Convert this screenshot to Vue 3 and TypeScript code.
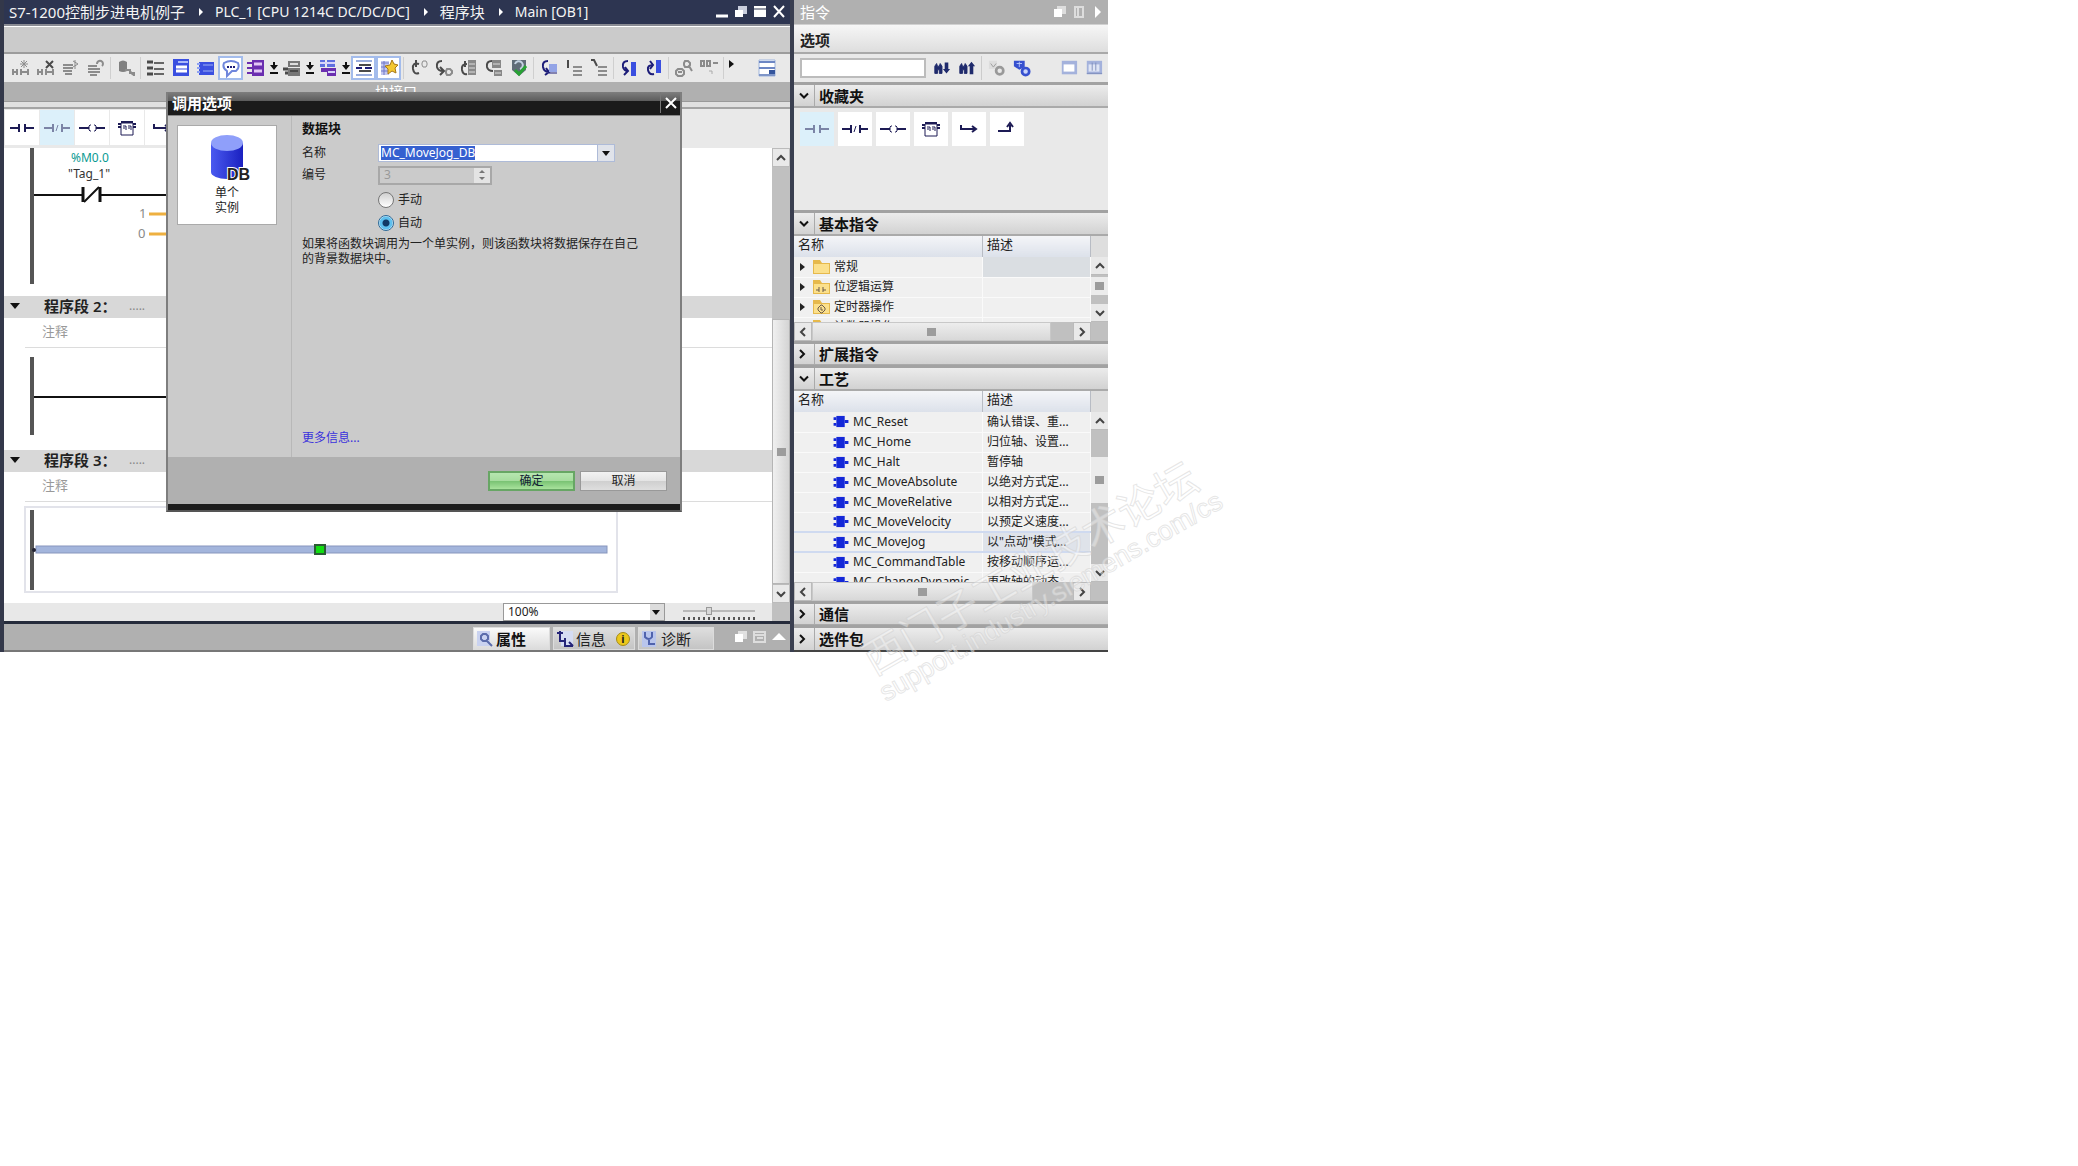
<script setup lang="ts">
import { onMounted, ref } from 'vue'

interface Shape { d: string; f?: string; s?: string; w?: number }
interface Tool { kind: 'icon' | 'drop' | 'sep' | 'more'; label?: string; boxed?: boolean; shapes?: Shape[] }

const G = '#8c8c8c'
const K = '#4a4a4a'
const B = '#3a4fe0'
const N = '#1c1c78'
const P = '#6b2fb0'

const icon = (label: string, shapes: Shape[], boxed = false): Tool => ({ kind: 'icon', label, shapes, boxed })
const sep: Tool = { kind: 'sep' }
const drop: Tool = { kind: 'drop', label: '展开' }

const tools: Tool[] = [
  icon('插入程序段', [{ d: 'M2 11v6M2 14h4M6 11v6M10 11v6M10 14h7M17 11v6', s: G, w: 2 }, { d: 'M13 2v8M9 6h8M10 3l6 6M16 3l-6 6', s: G }]),
  icon('删除程序段', [{ d: 'M2 11v6M2 14h4M6 11v6M10 11v6M10 14h7M17 11v6', s: G, w: 2 }, { d: 'M10 3l7 7M17 3l-7 7', s: K, w: 2 }]),
  icon('插入行', [{ d: 'M2 7h10M2 10h10M2 13h9M4 16h7', s: G, w: 2 }, { d: 'M12 3l5 3-5 3M14 2v9', s: G }]),
  icon('添加行', [{ d: 'M2 8h9M2 11h12M2 14h12M4 17h7', s: G, w: 2 }, { d: 'M11 6a3 3 0 1 1 5 2', s: G, w: 2 }]),
  sep,
  icon('复位启动值', [{ d: 'M3 4q4-3 8 0v9q-4 2-8 0z', f: '#808080' }, { d: 'M9 12h5v3h4v3M14 13l3 4', s: G, w: 2 }]),
  sep,
  icon('打开所有程序段', [{ d: 'M1 4h6M1 10h6M1 16h6', s: K, w: 3 }, { d: 'M8 5h10M8 11h10M8 16h10', s: '#666', w: 2 }]),
  icon('关闭所有程序段', [{ d: 'M2 1h16v17h-16z', f: B }, { d: 'M7 4h10', s: '#aab8f8', w: 2 }, { d: 'M5 9h11M5 13h11', s: '#fff', w: 3 }]),
  icon('编辑器布局', [{ d: 'M3 4h15v13h-15z', f: B }, { d: 'M1 6h3M1 10h3M1 14h3', s: '#8fa2f2', w: 2 }, { d: 'M7 7h10M7 13h10', s: '#9db1f4', w: 1 }]),
  icon('注释', [{ d: 'M3 5q7-4 14 0q2 5-2 8h-4l-5 5v-5q-5-3-3-8z', f: '#fff', s: '#6f86dc', w: 2 }, { d: 'M6 9h2M9 9h2M12 9h2', s: N, w: 2 }], true),
  icon('绝对操作数', [{ d: 'M6 2h12v16h-12z', f: P }, { d: 'M1 5h5M1 10h5M1 15h5', s: P, w: 2 }, { d: 'M8 6h8M8 13h8', s: '#e3c8f6', w: 3 }]),
  drop,
  icon('变量信息', [{ d: 'M6 3h12v6h-12zM6 10h12v8h-12z', f: '#777' }, { d: 'M1 11h5M3 15h3', s: K, w: 3 }, { d: 'M8 6h8', s: '#ddd', w: 2 }, { d: 'M8 13h8', s: K, w: 2 }]),
  drop,
  icon('块调用', [{ d: 'M2 2h5v7h-5zM9 2h8v7h-8z', f: '#5f6fe0' }, { d: 'M3 10h15v8h-9v-4h-6z', f: P }, { d: 'M2 5h15M10 14h7', s: '#d7d3fa', w: 2 }]),
  drop,
  icon('显示网络', [{ d: 'M2 3h16M2 17h16', s: '#9aaede', w: 2 }, { d: 'M5 7h12M5 13h12', s: K, w: 2 }, { d: 'M2 10h6M11 10h7', s: N, w: 2 }], true),
  icon('收藏', [{ d: 'M2 3h8v14h-8z', f: '#c4c8f0' }, { d: 'M2 5h8M2 9h8M2 13h8M5 3v14', s: '#7179c8' }, { d: 'M13 2l2 4 4 1-3 3 1 5-4-2-4 3v-5l-3-3 5-1z', f: '#f4c832', s: '#a87818' }], true),
  { kind: 'sep' },
  icon('转到上一个错误', [{ d: 'M10 6q-7-2-6 5 1 6 6 4M7 2v7', s: K, w: 2 }, { d: 'M14 3h3l1 2v2l-1 2h-3l-1-2v-2z', s: G }]),
  icon('转到下一个错误', [{ d: 'M8 3q-6 0-5 6 1 4 6 4M6 9l4 4-4 4', s: K, w: 2 }, { d: 'M13 11h3l2 2v2l-2 2h-3l-1-2v-2z', s: G, w: 2 }]),
  icon('更新调用', [{ d: 'M8 6q-6 0-5 6 1 5 5 4M6 3v6', s: K, w: 2 }, { d: 'M9 2h8v15h-8z', f: '#8a8a8a' }, { d: 'M10 6h6M10 10h6M10 14h6', s: '#ddd' }]),
  icon('编译块', [{ d: 'M8 3q-6 0-5 6 1 4 6 4', s: K, w: 2 }, { d: 'M8 2h9v8h-9zM10 12h8v6h-8z', f: '#888' }, { d: 'M9 6h7M11 15h6', s: '#ddd' }]),
  icon('一致性检查', [{ d: 'M3 2h14v10l-7 6-7-6z', f: '#606c78' }, { d: 'M6 6a4 4 0 1 1 5 5', s: '#c4d2e2', w: 2 }, { d: 'M6 12l4 4 7-8', s: '#28a234', w: 3 }]),
  sep,
  icon('转到', [{ d: 'M9 3q-6 0-5 6 1 5 6 5M7 10l3 4-4 3', s: N, w: 2 }, { d: 'M10 6h8v8h-8z', f: '#93a4e6' }, { d: 'M10 15h8', s: N, w: 1 }]),
  icon('向下', [{ d: 'M4 2v8', s: K, w: 2 }, { d: 'M9 9h9M9 13h9M9 17h9', s: G, w: 2 }]),
  icon('向右下', [{ d: 'M2 2h3l3 6', s: K, w: 2 }, { d: 'M9 9h9M9 13h9M9 17h9', s: G, w: 2 }]),
  sep,
  icon('向下导航', [{ d: 'M9 3q-6 0-5 6 1 4 5 4M6 9l3 4-4 4', s: N, w: 2 }, { d: 'M12 4h5v14h-5z', f: B }]),
  icon('向上导航', [{ d: 'M9 7q-6 0-5 5 1 5 6 4M6 3l3 4-3 4', s: N, w: 2 }, { d: 'M12 2h5v13h-5z', f: B }]),
  sep,
  icon('监视', [{ d: 'M11 3h3l2 2v2l-2 2h-3l-1-2v-2zM15 8l3 5', s: G, w: 2 }, { d: 'M4 11h4l2 2v3l-2 2h-4l-2-2v-3zM4 14h4', s: G, w: 2 }]),
  icon('监视开关', [{ d: 'M2 3h3v5h-3zM8 3h3v5h-3zM14 5h5', s: G, w: 2 }, { d: 'M10 13h3v3', s: '#aaa' }]),
  sep,
  { kind: 'more', label: '更多' },
]

const gridIcon: Shape[] = [{ d: 'M2 2h16v16h-16z', f: '#fff', s: '#9eb4dc' }, { d: 'M2 4h16M2 10h16', s: '#6d87c4', w: 2 }, { d: 'M12 12h6v6h-6z', f: '#34559c' }, { d: 'M2 17h16', s: '#7f96c8', w: 2 }]

const NV = '#1d1b55'
const contact: Shape[] = [{ d: 'M1 10h8M17 10h8', s: NV, w: 2 }, { d: 'M10 6v8M16 6v8', s: NV, w: 2 }]
const ncContact: Shape[] = [{ d: 'M0 10h9M18 10h8', s: NV, w: 2 }, { d: 'M9 6v8M18 6v8', s: NV, w: 2 }, { d: 'M12 13l2-6', s: NV }]
const coil: Shape[] = [{ d: 'M0 10h10M17 10h9', s: NV, w: 2 }, { d: 'M12 7h-1l-1 1v4l1 1h1M15 7h1l1 1v4l-1 1h-1', s: NV, w: 1 }]
const box: Shape[] = [{ d: 'M7 5h12v12h-12z', s: NV }, { d: 'M4 6h3M19 6h3M4 9h3M19 9h3', s: NV, w: 2 }, { d: 'M7 4h12', s: NV, w: 2 }, { d: 'M9 8h3v4M14 8h3v4M10 9v2M15 9v2', s: NV, w: 1 }]
const open: Shape[] = [{ d: 'M5 6v4h14M16 7l4 3-4 3', s: NV, w: 2 }]
const close: Shape[] = [{ d: 'M4 12h12v-6M13 8l3-4 3 4', s: NV, w: 2 }]

const editorFavs = [
  { label: '常开触点', shapes: contact }, { label: '常闭触点', shapes: ncContact, on: true }, { label: '赋值', shapes: coil },
  { label: '空功能框', shapes: box }, { label: '打开分支', shapes: open },
]
const sideFavs = [
  { label: '常开触点', shapes: contact, on: true }, { label: '常闭触点', shapes: ncContact }, { label: '赋值', shapes: coil },
  { label: '空功能框', shapes: box }, { label: '打开分支', shapes: open }, { label: '嵌套闭合', shapes: close },
]

const folders = [
  { name: '常规', mark: '', on: true }, { name: '位逻辑运算', mark: 'M6 8v5M10 8v5M3 11h3M10 11h3' },
  { name: '定时器操作', mark: 'M8 6h1l3 3v2l-3 3h-1l-3-3v-2zM8 8v3h2' }, { name: '计数器操作', mark: 'M5 8h6' },
]
const motion = [
  { name: 'MC_Reset', desc: '确认错误、重...' }, { name: 'MC_Home', desc: '归位轴、设置...' }, { name: 'MC_Halt', desc: '暂停轴' },
  { name: 'MC_MoveAbsolute', desc: '以绝对方式定...' }, { name: 'MC_MoveRelative', desc: '以相对方式定...' },
  { name: 'MC_MoveVelocity', desc: '以预定义速度...' }, { name: 'MC_MoveJog', desc: '以"点动"模式...', on: true },
  { name: 'MC_CommandTable', desc: '按移动顺序运...' }, { name: 'MC_ChangeDynamic', desc: '更改轴的动态...' },
]

const crumbs = [
  { text: 'S7-1200控制步进电机例子' }, { text: 'PLC_1 [CPU 1214C DC/DC/DC]', latin: true },
  { text: '程序块' }, { text: 'Main [OB1]', latin: true },
]
const dbName = ref('MC_MoveJog_DB')
const mode = ref('auto')
const zoom = ref('100%')
const zoomLevel = ref(35)
const nameBox = ref<HTMLInputElement | null>(null)
onMounted(() => {
  nameBox.value?.focus()
  nameBox.value?.select()
})
</script>

<template>
  <div class="page">
    <main class="shell">
      <section class="editor">
        <header class="titlebar">
          <nav class="crumbs">
            <template v-for="(c, i) in crumbs" :key="c.text">
              <i v-if="i" class="crumb-arrow"></i><span :class="{ latin: c.latin }">{{ c.text }}</span>
            </template>
          </nav>
          <div class="winctl">
            <button aria-label="最小化"><svg viewBox="0 0 14 14"><path d="M1 11h12" stroke="#fff" stroke-width="3" /></svg></button>
            <button aria-label="浮动"><svg viewBox="0 0 14 14"><path d="M4 1h9v8h-9z" fill="#c9cedd" /><path d="M1 5h8v7h-8z" fill="#fff" /></svg></button>
            <button aria-label="最大化"><svg viewBox="0 0 14 14"><path d="M1 1h12v11h-12z" fill="#fff" /><path d="M1 4h12" stroke="#2d3551" /></svg></button>
            <button aria-label="关闭"><svg viewBox="0 0 14 14"><path d="M2 1l10 11M12 1l-10 11" stroke="#fff" stroke-width="2" /></svg></button>
          </div>
        </header>
        <div class="menu-gap"></div>
        <div class="toolbar">
          <template v-for="(t, i) in tools" :key="i">
            <span v-if="t.kind === 'sep'" class="sep"></span>
            <button v-else-if="t.kind === 'drop'" class="drop" :aria-label="t.label"><svg viewBox="0 0 12 20"><path d="M5 4h2v3h3l-4 5-4-5h3zM2 14h8v2h-8z" /></svg></button>
            <button v-else-if="t.kind === 'more'" class="drop" :aria-label="t.label"><svg viewBox="0 0 12 20"><path d="M3 2l5 4-5 4z" /></svg></button>
            <button v-else class="tool" :class="{ boxed: t.boxed }" :aria-label="t.label">
              <svg viewBox="0 0 20 20"><path v-for="(s, j) in t.shapes" :key="j" :d="s.d" :fill="s.f ?? 'none'" :stroke="s.s ?? 'none'" :stroke-width="s.w ?? 1" /></svg>
            </button>
          </template>
          <button class="tool last" aria-label="设置">
            <svg viewBox="0 0 20 20"><path v-for="(s, j) in gridIcon" :key="j" :d="s.d" :fill="s.f ?? 'none'" :stroke="s.s ?? 'none'" :stroke-width="s.w ?? 1" /></svg>
          </button>
        </div>
        <div class="interface-bar">块接口</div>
        <div class="splitter"></div>
        <div class="fav-row">
          <button v-for="f in editorFavs" :key="f.label" :class="{ on: f.on }" :aria-label="f.label">
            <svg viewBox="0 0 26 20"><path v-for="(s, j) in f.shapes" :key="j" :d="s.d" :fill="s.f ?? 'none'" :stroke="s.s ?? 'none'" :stroke-width="s.w ?? 1" /></svg>
          </button>
        </div>
        <div class="work">
          <div class="networks">
            <svg class="rung" height="148">
              <path d="M28 0v136" stroke="#555" stroke-width="4" />
              <path d="M30 47h49M96 47h80" stroke="#111" stroke-width="2" />
              <path d="M79 39v15M96 39v15" stroke="#111" stroke-width="3" /><path d="M80 54l15-15" stroke="#111" stroke-width="2" />
              <text x="67" y="14" class="addr">%M0.0</text>
              <text x="64" y="30" class="tag">"Tag_1"</text>
              <text x="135" y="70" class="val">1</text><text x="134" y="90" class="val">0</text>
              <path d="M145 66h26M145 86h26" stroke="#eeb040" stroke-width="3" />
            </svg>
            <div class="net-head"><i class="tri"></i><b>程序段 2：</b><span>.....</span></div>
            <div class="comment">注释</div>
            <svg class="rung" height="102">
              <path d="M28 9v78" stroke="#555" stroke-width="4" /><path d="M30 49h300" stroke="#111" stroke-width="2" />
            </svg>
            <div class="net-head"><i class="tri"></i><b>程序段 3：</b><span>.....</span></div>
            <div class="comment">注释</div>
            <svg class="rung" height="102">
              <rect x="21" y="5" width="592" height="85" fill="none" stroke="#e2e3ea" stroke-width="2" />
              <path d="M28 8v80" stroke="#555" stroke-width="4" />
              <rect x="32" y="44" width="571" height="7" fill="#a3b5dc" stroke="#8796bd" />
              <circle cx="30" cy="48" r="2" fill="#223" />
              <rect x="311" y="43" width="10" height="9" fill="#12dd12" stroke="#2b5c34" stroke-width="2" />
            </svg>
          </div>
          <div class="vbar">
            <button class="sb" aria-label="向上滚动"><svg viewBox="0 0 12 12"><path d="M2 8l4-4 4 4" /></svg></button>
            <div class="vtrack"></div>
            <div class="vthumb"><i></i></div>
            <button class="sb" aria-label="向下滚动"><svg viewBox="0 0 12 12"><path d="M2 4l4 4 4-4" /></svg></button>
          </div>
        </div>
        <div class="zoombar">
          <div class="zoom-select">
            <select v-model="zoom" aria-label="缩放"><option>100%</option><option>75%</option></select>
            <i class="tri small"></i>
          </div>
          <div class="slider"><input v-model="zoomLevel" type="range" aria-label="缩放比例" /><i class="ticks"></i></div>
          <div class="corner"></div>
        </div>
        <div class="inspector">
          <button class="tab active"><svg viewBox="0 0 18 18"><path d="M1 1h13v15h-13z" fill="#c9d2f0" /><path d="M7 4h3l2 2v3l-2 2h-3l-2-2v-3zM11 11l5 5" fill="none" stroke="#5b6cab" stroke-width="2" /></svg>属性</button>
          <button class="tab info"><svg viewBox="0 0 18 18"><path d="M5 1h12v15h-12z" fill="#d5dcf3" /><path d="M1 3h6M4 1v10h4M9 8v8h8M13 12l4 4" fill="none" stroke="#252578" stroke-width="2" /></svg>信息<i class="badge">i</i></button>
          <button class="tab"><svg viewBox="0 0 18 18"><path d="M1 1h14v16h-14z" fill="#b9c5ec" /><path d="M4 2v5q4 4 7 0v-5M8 9v5h6" fill="none" stroke="#5063ad" stroke-width="2" /></svg>诊断</button>
          <div class="panelctl">
            <button aria-label="浮动"><svg viewBox="0 0 14 14"><path d="M4 1h9v8h-9z" fill="#e0e0e0" /><path d="M1 4h8v8h-8z" fill="#fff" /></svg></button>
            <button aria-label="停靠"><svg viewBox="0 0 14 14"><path d="M1 2h11v10h-11zM1 5h11M4 8h6" fill="none" stroke="#ddd" stroke-width="2" /></svg></button>
            <button aria-label="展开"><svg viewBox="0 0 14 14"><path d="M0 10l7-7 7 7z" fill="#fff" /></svg></button>
          </div>
        </div>
      </section>

      <aside class="side">
        <header class="side-title"><span>指令</span>
          <div class="panelctl">
            <button aria-label="浮动"><svg viewBox="0 0 14 14"><path d="M4 1h9v8h-9z" fill="#ddd" /><path d="M1 4h8v8h-8z" fill="#fff" /></svg></button>
            <button aria-label="停靠"><svg viewBox="0 0 14 14"><path d="M3 2h8v10h-8zM6 2v10" fill="none" stroke="#ddd" stroke-width="2" /></svg></button>
            <button aria-label="折叠"><svg viewBox="0 0 14 14"><path d="M4 1l6 6-6 6z" fill="#fff" /></svg></button>
          </div>
        </header>
        <div class="options">选项</div>
        <div class="search">
          <input type="text" aria-label="搜索" />
          <button aria-label="向下查找"><svg viewBox="0 0 20 20"><path d="M2 8l2-3 1 3h2l1-3 2 3v8h-3v-4h-2v4h-3z" fill="#1f2a6c" stroke="#1f2a6c" /><path d="M11 11h8l-4 5zM13 4h4v8h-4z" fill="#1f2a6c" /></svg></button>
          <button aria-label="向上查找"><svg viewBox="0 0 20 20"><path d="M2 8l2-3 1 3h2l1-3 2 3v8h-3v-4h-2v4h-3z" fill="#1f2a6c" stroke="#1f2a6c" /><path d="M11 8h8l-4-5zM13 8h4v9h-4z" fill="#1f2a6c" /></svg></button>
          <i class="rule"></i>
          <button aria-label="过滤"><svg viewBox="0 0 20 20"><path d="M1 2h9v9h-9z" fill="#ddd" /><path d="M3 5l3 4M9 5l-3 4" stroke="#999" /><circle cx="13" cy="13" r="4" fill="none" stroke="#999" stroke-width="3" /></svg></button>
          <button aria-label="配置"><svg viewBox="0 0 20 20"><path d="M1 2h12v7l-6 3-6-4z" fill="#3650cf" /><path d="M4 5h6M7 3v6" stroke="#b9c8ff" /><circle cx="14" cy="14" r="4" fill="#c9d4fb" stroke="#3650cf" stroke-width="3" /></svg></button>
          <span class="grow"></span>
          <button aria-label="单列"><svg viewBox="0 0 20 20"><path d="M2 2h17v15h-17z" fill="#a4b2dc" /><path d="M4 6h12v8h-12z" fill="#fff" /></svg></button>
          <button aria-label="多列"><svg viewBox="0 0 20 20"><path d="M2 2h17v15h-17z" fill="#a4b2dc" /><path d="M4 6h12v8h-12z" fill="#dfe5f5" /><path d="M8 4v9M12 4v9M2 16h17" stroke="#7d8cba" /></svg></button>
        </div>
        <button class="acc"><svg viewBox="0 0 20 20"><path d="M6 8l4 4 4-4" /></svg><b>收藏夹</b></button>
        <div class="side-favs">
          <button v-for="f in sideFavs" :key="f.label" :class="{ on: f.on }" :aria-label="f.label">
            <svg viewBox="0 0 26 20"><path v-for="(s, j) in f.shapes" :key="j" :d="s.d" :fill="s.f ?? 'none'" :stroke="s.s ?? 'none'" :stroke-width="s.w ?? 1" /></svg>
          </button>
        </div>
        <button class="acc"><svg viewBox="0 0 20 20"><path d="M6 8l4 4 4-4" /></svg><b>基本指令</b></button>
        <div class="grid basic">
          <div class="grid-main">
            <table>
              <thead><tr><th>名称</th><th class="dcol">描述</th></tr></thead>
              <tbody>
                <tr v-for="f in folders" :key="f.name">
                  <td><span class="cell folder"><i class="right"></i>
                    <svg viewBox="0 0 17 16"><path d="M0 1h7l2 3h8v11h-17z" fill="#e6b94c" /><path d="M1 5h15v9h-15z" fill="#fbe08c" /><path :d="f.mark || 'M0 0'" fill="none" stroke="#6b5a4a" /></svg>{{ f.name }}</span></td>
                  <td :class="{ hot: f.on }"></td>
                </tr>
              </tbody>
            </table>
          </div>
          <div class="grid-bar"><div class="bar-head"></div>
            <button class="sb" aria-label="向上滚动"><svg viewBox="0 0 12 12"><path d="M2 8l4-4 4 4" /></svg></button>
            <div class="thumb"><i></i></div><div class="gap"></div>
            <button class="sb" aria-label="向下滚动"><svg viewBox="0 0 12 12"><path d="M2 4l4 4 4-4" /></svg></button>
          </div>
        </div>
        <div class="hbar">
          <button class="sb" aria-label="向左滚动"><svg viewBox="0 0 12 12"><path d="M8 2l-4 4 4 4" /></svg></button>
          <div class="hthumb"><i></i></div><div class="hgap"></div>
          <button class="sb" aria-label="向右滚动"><svg viewBox="0 0 12 12"><path d="M4 2l4 4-4 4" /></svg></button>
        </div>
        <button class="acc thin"><svg viewBox="0 0 20 20"><path d="M6 6l4 4-4 4" /></svg><b>扩展指令</b></button>
        <button class="acc"><svg viewBox="0 0 20 20"><path d="M6 8l4 4 4-4" /></svg><b>工艺</b></button>
        <div class="grid tech">
          <div class="grid-main">
            <table>
              <thead><tr><th>名称</th><th class="dcol">描述</th></tr></thead>
              <tbody>
                <tr v-for="m in motion" :key="m.name" :class="{ picked: m.on }">
                  <td><span class="cell block"><svg viewBox="0 0 16 14"><path d="M3 1h9v12h-9z" fill="#1428d8" /><path d="M0 4h3M0 10h3M12 7h4" stroke="#1428d8" stroke-width="3" /></svg>{{ m.name }}</span></td>
                  <td class="desc">{{ m.desc }}</td>
                </tr>
              </tbody>
            </table>
          </div>
          <div class="grid-bar"><div class="bar-head"></div>
            <button class="sb" aria-label="向上滚动"><svg viewBox="0 0 12 12"><path d="M2 8l4-4 4 4" /></svg></button>
            <div class="gap short"></div><div class="thumb tall"><i></i></div><div class="gap"></div>
            <button class="sb" aria-label="向下滚动"><svg viewBox="0 0 12 12"><path d="M2 4l4 4 4-4" /></svg></button>
          </div>
        </div>
        <div class="hbar">
          <button class="sb" aria-label="向左滚动"><svg viewBox="0 0 12 12"><path d="M8 2l-4 4 4 4" /></svg></button>
          <div class="hthumb"><i></i></div><div class="hgap wide"></div>
          <button class="sb" aria-label="向右滚动"><svg viewBox="0 0 12 12"><path d="M4 2l4 4-4 4" /></svg></button>
        </div>
        <button class="acc thin"><svg viewBox="0 0 20 20"><path d="M6 6l4 4-4 4" /></svg><b>通信</b></button>
        <button class="acc thin end"><svg viewBox="0 0 20 20"><path d="M6 6l4 4-4 4" /></svg><b>选件包</b></button>
      </aside>

      <section class="dialog" role="dialog" aria-label="调用选项">
        <header><b>调用选项</b><button aria-label="关闭"><svg viewBox="0 0 14 14"><path d="M2 2l10 10M12 2l-10 10" stroke="#fff" stroke-width="2" /></svg></button></header>
        <div class="dlg-body">
          <div class="dlg-left">
            <button class="instance">
              <svg viewBox="0 0 54 50">
                <defs><linearGradient id="cyl"><stop offset="0" stop-color="#4a5af0" /><stop offset="1" stop-color="#1a20c0" /></linearGradient></defs>
                <path d="M11 10v29a16 7 0 0 0 32 0v-29z" fill="url(#cyl)" /><ellipse cx="27" cy="10" rx="16" ry="8" fill="#8f9ffa" />
                <text x="27" y="47">DB</text>
              </svg>
              <span>单个<br />实例</span>
            </button>
          </div>
          <form class="dlg-form" @submit.prevent>
            <b class="legend">数据块</b>
            <div class="field"><label for="db-name">名称</label>
              <div class="combo"><input id="db-name" ref="nameBox" v-model="dbName" type="text" /><button type="button" aria-label="选择"><i class="tri small"></i></button></div>
            </div>
            <div class="field"><label for="db-no">编号</label>
              <div class="spin"><input id="db-no" type="text" value="3" disabled /><span><button type="button" disabled aria-label="增加"><i class="up"></i></button><button type="button" disabled aria-label="减少"><i class="down"></i></button></span></div>
            </div>
            <div class="radios">
              <label class="radio"><input v-model="mode" type="radio" name="mode" value="manual" />手动</label>
              <label class="radio"><input v-model="mode" type="radio" name="mode" value="auto" />自动</label>
            </div>
            <p>如果将函数块调用为一个单实例，则该函数块将数据保存在自己<br />的背景数据块中。</p>
            <a href="#more">更多信息...</a>
          </form>
        </div>
        <footer><button class="ok">确定</button><button>取消</button></footer>
      </section>
    </main>

    <svg class="watermark" viewBox="0 0 400 300" aria-hidden="true">
      <text font-size="42" transform="translate(34 236) rotate(-30)">西门子工业技术论坛</text>
      <text font-size="27" transform="translate(46 262) rotate(-30)">support.industry.siemens.com/cs</text>
    </svg>
  </div>
</template>

<style>
body { background: #fff; }
</style>

<style scoped>
* { box-sizing: border-box; }
.page { position: relative; min-height: 100vh; overflow: hidden; background: #fff; }
.shell {
  position: relative; display: flex; width: calc(100% - 970px); min-width: 900px;
  border-left: 4px solid #33384a; color: #222; font: 12px/14px "Noto Sans", "Noto Sans CJK SC", sans-serif;
}
button, input, select { font: inherit; color: inherit; margin: 0; padding: 0; border: 0; background: none; }
button { display: flex; align-items: center; justify-content: center; }
svg { display: block; flex: none; }
i { display: block; font-style: normal; }

.editor { flex: 1; min-width: 0; display: flex; flex-direction: column; }
.titlebar { display: flex; justify-content: space-between; height: 26px; padding: 0 4px 0 5px; background: #2d3551; border-bottom: 2px solid #8a8c94; color: #f4f4f4; }
.crumbs { display: flex; align-items: center; font-size: 15px; line-height: 24px; white-space: nowrap; }
.crumbs .latin { font-size: 14px; }
.crumb-arrow { margin: 0 12px 0 14px; border: 4px solid transparent; border-left-color: #fff; border-right: 0; }
.winctl, .panelctl { display: flex; align-items: center; gap: 5px; }
.winctl svg, .panelctl svg { width: 14px; height: 14px; }
.menu-gap { height: 28px; background: #cbcbcb; border-top: 1px solid #fff; border-bottom: 2px solid #9c9c9c; }
.toolbar { display: flex; align-items: center; height: 28px; padding: 0 11px 0 4px; background: #e9e9e9; }
.tool { width: 25px; height: 24px; flex: none; }
.tool svg { width: 20px; height: 20px; }
.tool.boxed { background: #fff; border: 2px solid #a3bcec; }
.tool.last { margin-left: auto; }
.drop { width: 11px; flex: none; }
.drop svg { width: 12px; height: 20px; fill: #111; }
.sep { width: 1px; height: 22px; margin: 0 2px; flex: none; background: #cfcfcf; }
.interface-bar { height: 20px; padding-left: 371px; background: #b0b0b0; color: #fff; font-size: 14px; line-height: 19px; border-bottom: 1px solid #999; }
.splitter { height: 7px; background: #e0e0e0; border-bottom: 2px solid #a4a4a4; }
.fav-row { display: flex; gap: 1px; height: 39px; padding: 1px 0 3px 1px; background: #e9e9e9; }
.fav-row button { width: 34px; background: #fff; }
.fav-row .on, .side-favs .on { background: #dcf0fa; }
.on svg { opacity: .5; }
.fav-row svg, .side-favs svg { width: 26px; height: 20px; }

.work { display: flex; background: #fff; }
.networks { flex: 1; min-width: 0; height: 455px; overflow: hidden; }
.rung { width: 100%; }
.addr { fill: #0a9a92; font-size: 12px; }
.tag { fill: #333; font-size: 12px; }
.val { fill: #8a8a8a; font-size: 13px; }
.net-head { display: flex; align-items: center; height: 22px; padding: 0 0 2px 6px; background: #d8d8d8; }
.net-head b { margin-left: 24px; font-size: 15px; font-weight: 600; white-space: nowrap; width: 85px; }
.net-head span { color: #888; }
.tri { border: 5px solid transparent; border-top: 6px solid #111; border-bottom: 0; }
.tri.small { border-width: 5px 4px 0; }
.comment { height: 30px; margin-left: 21px; padding-left: 17px; border-bottom: 1px solid #dcdcdc; color: #999; font-size: 13px; line-height: 27px; }
.vbar { width: 18px; display: flex; flex-direction: column; background: #c0c0c0; }
.sb { flex: none; width: 18px; height: 19px; background: #e9e9e9; border: 1px solid #bbb; }
.sb svg { width: 12px; height: 12px; fill: none; stroke: #444; stroke-width: 2; }
.vtrack { height: 152px; }
.vthumb { flex: 1; display: flex; align-items: center; justify-content: center; border: 1px solid #b5b5b5; background: linear-gradient(90deg, #f0f0f0, #d4d4d4); }
.vthumb i, .thumb i, .hthumb i { width: 9px; height: 8px; background: #9c9c9c; }

.zoombar { display: flex; justify-content: flex-end; height: 18px; background: #e8e8e8; }
.zoom-select { display: flex; position: relative; width: 162px; }
.zoom-select select { flex: 1; appearance: none; padding-left: 4px; background: linear-gradient(90deg, #fff 146px, #dcdcdc 146px); border: 1px solid #999; }
.zoom-select i { position: absolute; right: 5px; top: 7px; }
.slider { width: 72px; margin: 4px 17px 0 18px; }
.slider input { display: block; width: 100%; height: 8px; appearance: none; background: linear-gradient(#b8b8b8, #b8b8b8) center / 100% 2px no-repeat; }
.slider input::-webkit-slider-thumb { appearance: none; width: 6px; height: 8px; background: #d8d8d8; border: 1px solid #999; }
.ticks { height: 3px; margin-top: 2px; background: repeating-linear-gradient(90deg, #555 0 2px, transparent 2px 5px); }
.corner { width: 18px; background: #c0c0c0; }
.inspector { display: flex; justify-content: flex-end; gap: 3px; height: 31px; padding-top: 2px; background: #b0b0b0; border-top: 3px solid #252b3b; border-bottom: 2px solid #777; }
.tab { width: 76px; height: 23px; margin-top: 1px; padding-left: 2px; justify-content: flex-start; gap: 2px; background: linear-gradient(#dedede, #c4c4c4); border: 1px solid #dcdcdc; font-size: 15px; line-height: 20px; }
.tab svg { width: 18px; height: 18px; }
.tab.active { width: 77px; background: linear-gradient(#fafafa, #dcdcdc); font-weight: 700; color: #111; }
.tab.info { width: 82px; }
.badge { width: 14px; height: 14px; margin-left: 8px; border-radius: 7px; background: #ecc81c; border: 1px solid #a58a18; color: #222; font-size: 11px; line-height: 12px; font-weight: 700; text-align: center; }
.inspector .panelctl { margin: 0 4px 2px 17px; }

.side { flex: none; display: flex; flex-direction: column; width: 318px; border-left: 4px solid #3a3f50; background: #e9e9e9; }
.side-title { display: flex; align-items: center; justify-content: space-between; height: 25px; padding: 0 3px 0 6px; background: #b0b0b0; color: #fff; font-size: 15px; border-bottom: 1px solid #d0d0d0; }
.options { height: 29px; padding: 0 6px; font-size: 15px; line-height: 30px; font-weight: 600; background: linear-gradient(#f6f6f6, #dedede); border-bottom: 2px solid #a9a9a9; }
.search { display: flex; align-items: center; height: 28px; padding: 0 2px 0 6px; }
.search input { width: 126px; height: 20px; background: #fff; border: 2px solid #bcbcbc; }
.search button { width: 25px; }
.search button svg { width: 18px; height: 18px; }
.search input + button { margin-left: 3px; }
.rule { width: 1px; height: 24px; margin: 0 2px; background: #ccc; }
.grow { flex: 1; }
.acc { justify-content: flex-start; height: 26px; flex: none; border-top: 3px solid #a2a2a2; border-bottom: 2px solid #aaa; background: linear-gradient(#ececec, #d2d2d2); font-size: 15px; line-height: 20px; color: #111; }
.acc svg { width: 21px; height: 100%; fill: none; stroke: #111; stroke-width: 2; border-right: 1px solid #aaa; }
.acc b { margin-left: 4px; font-weight: 600; }
.acc.thin { height: 24px; border-bottom-width: 1px; }
.acc.end { height: 27px; border-bottom: 2px solid #444; }
.side-favs { display: flex; gap: 4px; height: 102px; padding: 4px 0 0 6px; }
.side-favs button { width: 34px; height: 34px; background: #fff; }

.grid { display: flex; overflow: hidden; }
.grid-main { flex: 1; min-width: 0; overflow: hidden; }
.basic { height: 86px; }
.tech { height: 191px; }
table { width: 100%; border-collapse: collapse; table-layout: fixed; }
th { height: 21px; padding: 0 0 0 4px; vertical-align: top; text-align: left; font-weight: 400; font-size: 13px; line-height: 17px; background: linear-gradient(#f4f5f8, #dce1ea); border-right: 1px solid #b8bcc4; }
.dcol { width: 108px; }
td { height: 20px; padding: 0; background: #f0f0f0; border-bottom: 1px solid #fafafa; border-right: 1px solid #fafafa; line-height: 16px; white-space: nowrap; overflow: hidden; }
td.hot { background: #dadee2; }
.desc { padding-left: 4px; }
.picked td { border-top: 2px solid #cfdaf0; border-bottom: 2px solid #cfdaf0; }
.picked .desc { background: #dfe3ea; }
.cell { display: flex; align-items: center; }
.folder { padding-left: 6px; }
.folder svg { width: 17px; height: 16px; margin: 0 4px 0 8px; }
.right { border: 4px solid transparent; border-left: 5px solid #222; border-right: 0; }
.block { padding-left: 39px; }
.block svg { width: 16px; height: 13px; margin-right: 4px; }
.grid-bar { width: 17px; display: flex; flex-direction: column; background: #c0c0c0; }
.grid-bar .sb { width: 17px; height: 18px; border-width: 0 0 1px; }
.bar-head { height: 21px; flex: none; background: #dedede; }
.thumb { display: flex; align-items: center; justify-content: center; height: 18px; margin-top: 2px; flex: none; background: #ececec; }
.thumb.tall { height: 46px; margin-top: 0; }
.gap { flex: 1; }
.gap.short { flex: none; height: 27px; }
.hbar { display: flex; height: 19px; flex: none; padding-right: 17px; background: #c0c0c0; }
.hthumb { flex: 1; display: flex; align-items: center; justify-content: center; background: linear-gradient(#ededed, #d8d8d8); border: 1px solid #c8c8c8; }
.hgap { width: 22px; }
.hgap.wide { width: 40px; }

.dialog { position: absolute; left: 162px; top: 92px; width: 516px; background: #cbcbcb; border: 2px solid #7e7e7e; border-top: 0; border-bottom: 2px solid #555; }
.dialog header { display: flex; justify-content: space-between; align-items: center; height: 24px; padding: 0 0 2px 4px; background: linear-gradient(#7e7e7e, #5c5c5c 9px, #1b1b1b 9px); color: #fff; font-size: 15px; border-bottom: 1px solid #888; }
.dialog header button { width: 20px; height: 21px; border-left: 1px solid #777; }
.dialog header svg { width: 14px; height: 14px; }
.dlg-body { display: flex; height: 341px; }
.dlg-left { width: 124px; padding: 9px; border-right: 1px solid #b8b8b8; }
.instance { flex-direction: column; justify-content: flex-start; width: 100px; height: 100px; padding-top: 7px; background: #fff; border: 1px solid #aaa; line-height: 15px; }
.instance svg { width: 54px; height: 50px; }
.instance text { font: 700 16px "Liberation Sans", sans-serif; fill: #222; stroke: #fff; stroke-width: 2px; paint-order: stroke; }
.instance span { margin-top: 2px; }
.dlg-form { flex: 1; display: flex; flex-direction: column; align-items: flex-start; padding: 2px 0 0 10px; }
.legend { height: 24px; font-size: 13px; line-height: 20px; color: #111; }
.field { display: flex; align-items: center; height: 22px; }
.field label { width: 76px; }
.combo { display: flex; width: 237px; height: 18px; background: #fff; border: 1px solid #aebbd8; }
.combo input { flex: 1; min-width: 0; padding-left: 2px; outline: 0; }
.combo input::selection { background: #3560d0; color: #fff; }
.combo button { width: 17px; background: #e0e3ea; border-left: 1px solid #aebbd8; }
.spin { display: flex; width: 114px; height: 19px; border: 2px solid #a8a8a8; }
.spin input { flex: 1; min-width: 0; padding-left: 4px; color: #999; }
.spin span { width: 16px; background: #e4e4e4; }
.spin button { width: 16px; height: 7px; }
.up, .down { border: 3px solid transparent; border-top: 0; border-bottom-color: #777; }
.down { border: 3px solid transparent; border-bottom: 0; border-top-color: #777; }
.radios { margin: 2px 0 0 76px; }
.radio { display: flex; align-items: center; gap: 4px; height: 23px; }
.radio input { appearance: none; width: 16px; height: 16px; border: 1px solid #777; border-radius: 8px; background: linear-gradient(#d0d0d0, #fff); }
.radio input:checked { border-color: #2d6a9a; background: radial-gradient(circle, #123a66 0 3px, #5fc0ee 4px 6px, #dff3fc 7px); }
p { margin: 2px 0 0; font-size: 12px; line-height: 15px; white-space: nowrap; }
.dlg-form a { margin-top: auto; margin-bottom: 12px; color: #3a32dc; text-decoration: none; }
.dialog footer { display: flex; justify-content: flex-end; gap: 5px; height: 53px; padding: 14px 13px 0; background: #b0b0b0; border-bottom: 6px solid #1d1d1d; }
.dialog footer button { width: 87px; height: 20px; background: linear-gradient(#f2f2f2, #e4e4e4 50%, #cfcfcf 50%, #dedede); border: 1px solid #999; }
.dialog footer .ok { background: linear-gradient(#b6e6b0, #a6dc9e 50%, #78c272 50%, #a8e29c); border: 2px solid #67a664; color: #123; }

.watermark { position: absolute; left: 840px; top: 440px; width: 400px; height: 300px; pointer-events: none; }
.watermark text { font-family: "Liberation Sans", "Noto Sans CJK SC", sans-serif; fill: rgba(255, 255, 255, .4); stroke: rgba(205, 205, 205, .5); stroke-width: 1px; }
</style>
